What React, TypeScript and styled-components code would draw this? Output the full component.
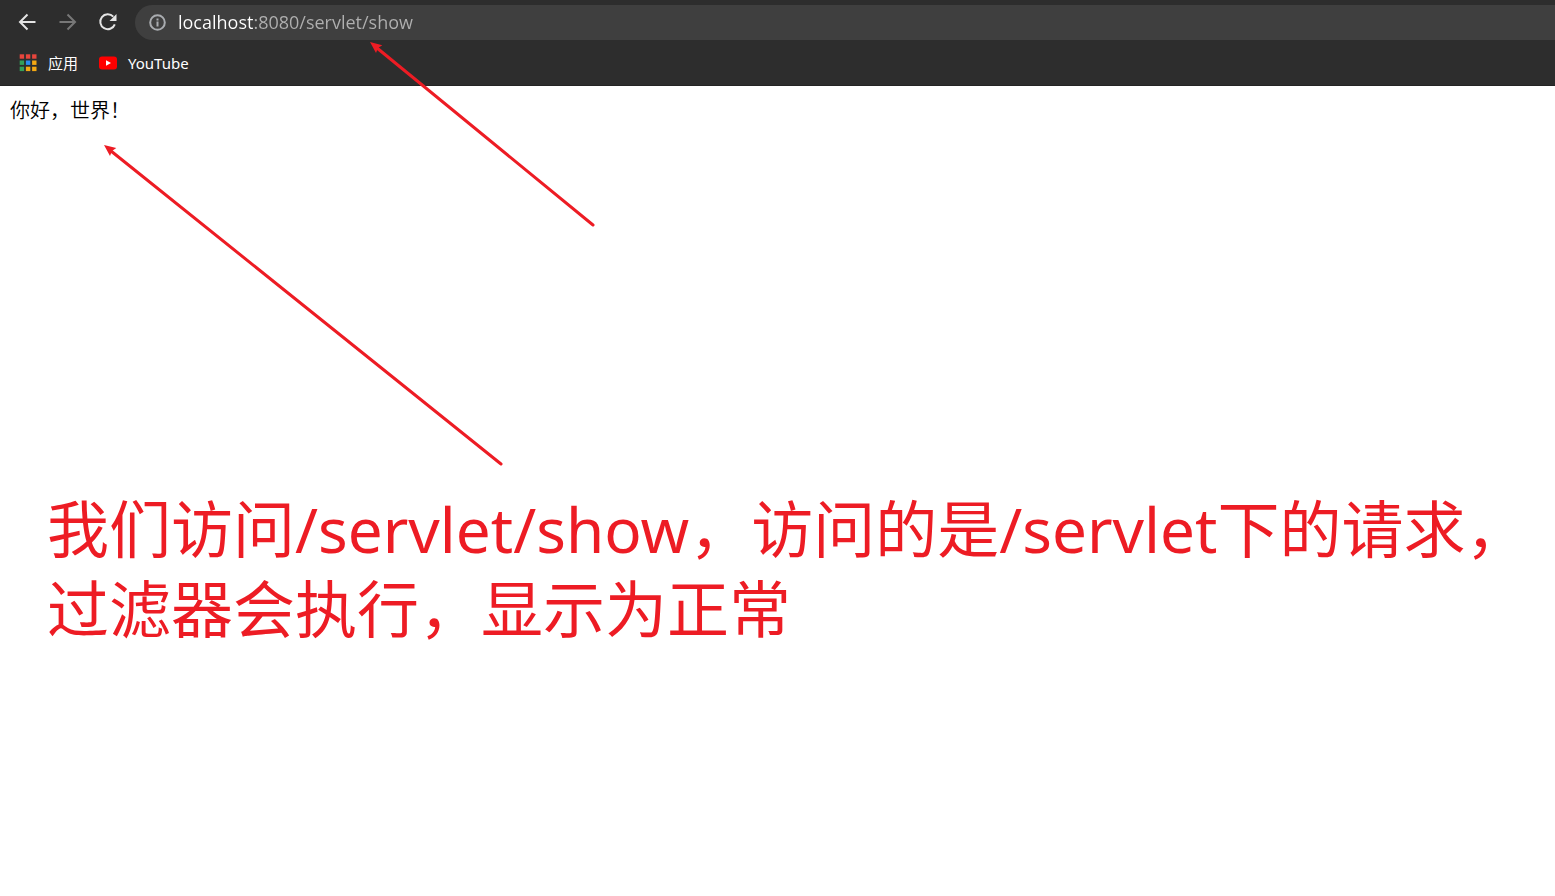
import React from "react";
import styled, { createGlobalStyle } from "styled-components";

const GlobalStyle = createGlobalStyle`
  * { box-sizing: border-box; }
  body {
    margin: 0;
    background: #fff;
    font-family: "Noto Sans", "Noto Sans CJK SC", sans-serif;
  }
`;

const Page = styled.div`
  position: relative;
  min-height: 100vh;
  overflow: hidden;
`;

const Chrome = styled.header`
  background: #2d2d2d;
  border-bottom: 1px solid #242424;
  height: 86px;
`;

const Toolbar = styled.div`
  display: flex;
  align-items: center;
  height: 45px;
  padding-left: 15px;
`;

const NavButton = styled.button`
  display: flex;
  align-items: flex-start;
  justify-content: center;
  width: 24px;
  height: 25px;
  margin-right: 16px;
  padding: 0;
  border: 0;
  background: none;
  color: ${(p) => (p.disabled ? "#777" : "#e4e4e4")};
`;

const AddressBar = styled.label`
  display: flex;
  flex: 1;
  align-items: center;
  gap: 12px;
  height: 35px;
  padding-left: 14px;
  border-radius: 18px 0 0 18px;
  background: #3f3f3f;
  color: #a9acb0;
`;

const AddressInput = styled.input`
  flex: 1;
  height: 35px;
  padding: 0 0 2px;
  border: 0;
  outline: 0;
  font: 18px/33px "Open Sans", "Noto Sans CJK SC", sans-serif;
  color: #fff;
  background: linear-gradient(to right, #fff 76px, #b0b0b0 76px);
  -webkit-background-clip: text;
  background-clip: text;
  -webkit-text-fill-color: transparent;
`;

const Bookmarks = styled.nav`
  display: flex;
  align-items: center;
  gap: 20px;
  height: 36px;
  padding-left: 18px;
`;

const Bookmark = styled.a`
  display: flex;
  align-items: center;
  gap: 10px;
  color: #fff;
  font-size: 15px;
  line-height: 24px;
  text-decoration: none;
`;

const Greeting = styled.p`
  margin: 0;
  padding: 10px 10px 8px;
  color: #000;
  font-size: 20px;
  font-weight: 350;
  line-height: 30px;
`;

const Note = styled.p`
  margin: 0;
  padding: 355px 0 0 47px;
  color: #ed1c24;
  font-size: 62px;
  line-height: 80px;
  white-space: nowrap;
`;

const Arrows = styled.svg`
  position: absolute;
  top: 0;
  left: 0;
  pointer-events: none;
`;

const dots = [
  ["#e8453c", "#e8453c", "#e8453c"],
  ["#34a05a", "#2a8cf0", "#f5a913"],
  ["#34a05a", "#f5a913", "#f5a913"],
];

export default function App() {
  return (
    <Page>
      <GlobalStyle />
      <Chrome>
        <Toolbar>
          <NavButton aria-label="后退">
            <svg width="24" height="24" viewBox="0 0 24 24" fill="none" stroke="currentColor" strokeWidth="2">
              <path d="M20.5 12H5.5M12.5 4.500L5 12l7.500 7.500" />
            </svg>
          </NavButton>
          <NavButton aria-label="前进" disabled>
            <svg width="24" height="24" viewBox="0 0 24 24" fill="none" stroke="currentColor" strokeWidth="2">
              <path d="M4.500 12h15M12.500 4.500L20 12l-7.500 7.500" />
            </svg>
          </NavButton>
          <NavButton aria-label="重新加载">
            <svg width="24" height="24" viewBox="0 0 24 24">
              <path d="M18.300 6.600A7.500 7.500 0 1 0 19.800 14.300" fill="none" stroke="currentColor" strokeWidth="2" />
              <path d="M21.500 4v7h-7z" fill="currentColor" />
            </svg>
          </NavButton>
          <AddressBar>
            <svg width="17" height="17" viewBox="0 0 17 17" aria-hidden="true">
              <circle cx="8.500" cy="8.500" r="7.300" fill="none" stroke="currentColor" strokeWidth="2" />
              <path d="M7.500 7.500h2v5h-2zM7.500 4.500h2v2h-2z" fill="currentColor" />
            </svg>
            <AddressInput aria-label="地址" spellCheck={false} defaultValue="localhost:8080/servlet/show" />
          </AddressBar>
        </Toolbar>
        <Bookmarks>
          <Bookmark href="#apps">
            <svg width="20" height="20" viewBox="0 0 20 20" aria-hidden="true">
              {dots.map((row, y) =>
                row.map((fill, x) => (
                  <rect key={`${x}-${y}`} x={1.7 + x * 6.2} y={1.3 + y * 6.2} width="4.400" height="4.400" fill={fill} />
                ))
              )}
            </svg>
            应用
          </Bookmark>
          <Bookmark href="#youtube">
            <svg width="20" height="20" viewBox="0 0 20 20" aria-hidden="true">
              <rect x="1" y="3.500" width="18" height="13" rx="3" fill="#f00" />
              <path d="M8 7.200v5.600l5-2.800z" fill="#fff" />
            </svg>
            YouTube
          </Bookmark>
        </Bookmarks>
      </Chrome>
      <main>
        <Greeting>你好，世界！</Greeting>
        <Note>
          我们访问/servlet/show，访问的是/servlet下的请求，
          <br />
          过滤器会执行，显示为正常
        </Note>
      </main>
      <Arrows width="600" height="470" viewBox="0 0 600 470" aria-hidden="true">
        <g stroke="#ed1c24" strokeWidth="3" strokeLinecap="round">
          <path d="M377 48L593 225" />
          <path d="M111 151L501 464" />
        </g>
        <g fill="#ed1c24">
          <path d="M370 42l12.300 3.300-4.300 2.700-2 5z" />
          <path d="M104 145l12.300 3-4.300 3-2 5z" />
        </g>
      </Arrows>
    </Page>
  );
}
